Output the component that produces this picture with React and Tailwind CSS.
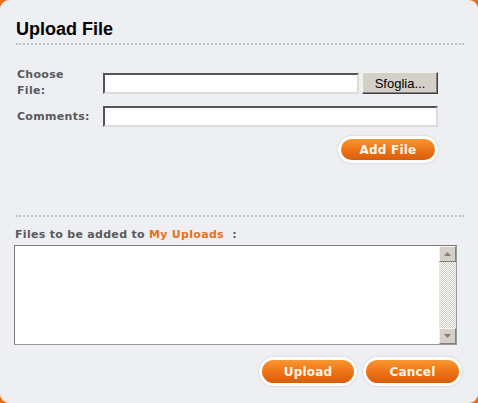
export default function App() {
  const label = "font-['DejaVu_Sans',Verdana,sans-serif] text-[11px] font-bold tracking-[0.3px] text-[#5a5a5c]";
  const pill =
    "rounded-full bg-white p-[3px] shadow-[0_0_2px_rgba(120,90,60,0.35)]";
  const pillInner =
    "flex h-full w-full items-center justify-center rounded-full bg-gradient-to-b from-[#f8962f] via-[#ee7518] to-[#d85d08] font-['DejaVu_Sans',Verdana,sans-serif] text-[12px] font-bold tracking-[0.2px] text-[#fff7ec]";

  return (
    <div className="h-[403px] w-[478px] bg-[#ef6a12]">
      <div className="flex h-full flex-col rounded-[9px] bg-[#eeeff3] pl-[16px] pr-[14px] pt-[18px]">
        <h1 className="font-['Liberation_Sans',Arial,sans-serif] text-[18px] font-bold leading-[22px] text-black">
          Upload File
        </h1>
        <div className="mt-[3px] border-t-2 border-dotted border-[#c2c3c8]" />

        <div className="mt-[22px] flex w-[422px] flex-col pl-[1px]">
          <div className="flex items-center">
            <div className={`${label} w-[86px] leading-[16px]`}>
              Choose
              <br />
              File:
            </div>
            <div className="h-[21px] w-[256px] border-2 border-b-[#dcdcdc] border-l-[#555] border-r-[#dcdcdc] border-t-[#555] bg-white" />
            <button className="ml-[3px] h-[22px] w-[76px] border border-b-[#404040] border-l-[#f4f3ef] border-r-[#404040] border-t-[#f4f3ef] bg-[#d4d0c8] font-['Liberation_Sans',Arial,sans-serif] text-[13px] leading-none text-black shadow-[inset_-1px_-1px_0_#808080]">
              Sfoglia...
            </button>
          </div>
          <div className="mt-[7px] flex items-center">
            <div className={`${label} w-[86px] leading-[16px]`}>Comments:</div>
            <div className="h-[21px] w-[335px] border-2 border-b-[#dcdcdc] border-l-[#555] border-r-[#dcdcdc] border-t-[#555] bg-white" />
          </div>
          <div className="mt-[9px] flex justify-end">
            <button className={`${pill} h-[27px] w-[100px]`}>
              <span className={pillInner}>Add File</span>
            </button>
          </div>
        </div>

        <div className="mt-[52px] border-t-2 border-dotted border-[#c2c3c8]" />
        <div className={`${label} -ml-[1px] mt-[11px] leading-[14px]`}>
          Files to be added to <span className="text-[#e8711c]">My Uploads</span>&nbsp; :
        </div>

        <div className="-ml-[2px] mt-[3px] flex h-[100px] w-[443px] border border-b-[#9a9a9a] border-l-[#7c7c7c] border-r-[#9a9a9a] border-t-[#7c7c7c] bg-white">
          <div className="flex-1" />
          <div className="flex w-[17px] flex-col">
            <div className="flex h-[16px] items-center justify-center border border-b-[#808080] border-l-[#f4f3ef] border-r-[#808080] border-t-[#f4f3ef] bg-[#d4d0c8]">
              <svg width="7" height="4" viewBox="0 0 7 4">
                <path d="M3.5 0 L7 4 L0 4 Z" fill="#808080" />
              </svg>
            </div>
            <div className="flex-1 bg-[conic-gradient(#ffffff_25%,#cfcdc6_0_50%,#ffffff_0_75%,#cfcdc6_0)] bg-[length:2px_2px]" />
            <div className="flex h-[16px] items-center justify-center border border-b-[#808080] border-l-[#f4f3ef] border-r-[#808080] border-t-[#f4f3ef] bg-[#d4d0c8]">
              <svg width="7" height="4" viewBox="0 0 7 4">
                <path d="M0 0 L7 0 L3.5 4 Z" fill="#808080" />
              </svg>
            </div>
          </div>
        </div>

        <div className="mr-[2px] mt-[12px] flex justify-end gap-[6px]">
          <button className={`${pill} h-[29px] w-[98px]`}>
            <span className={pillInner}>Upload</span>
          </button>
          <button className={`${pill} h-[29px] w-[99px]`}>
            <span className={pillInner}>Cancel</span>
          </button>
        </div>
      </div>
    </div>
  );
}
